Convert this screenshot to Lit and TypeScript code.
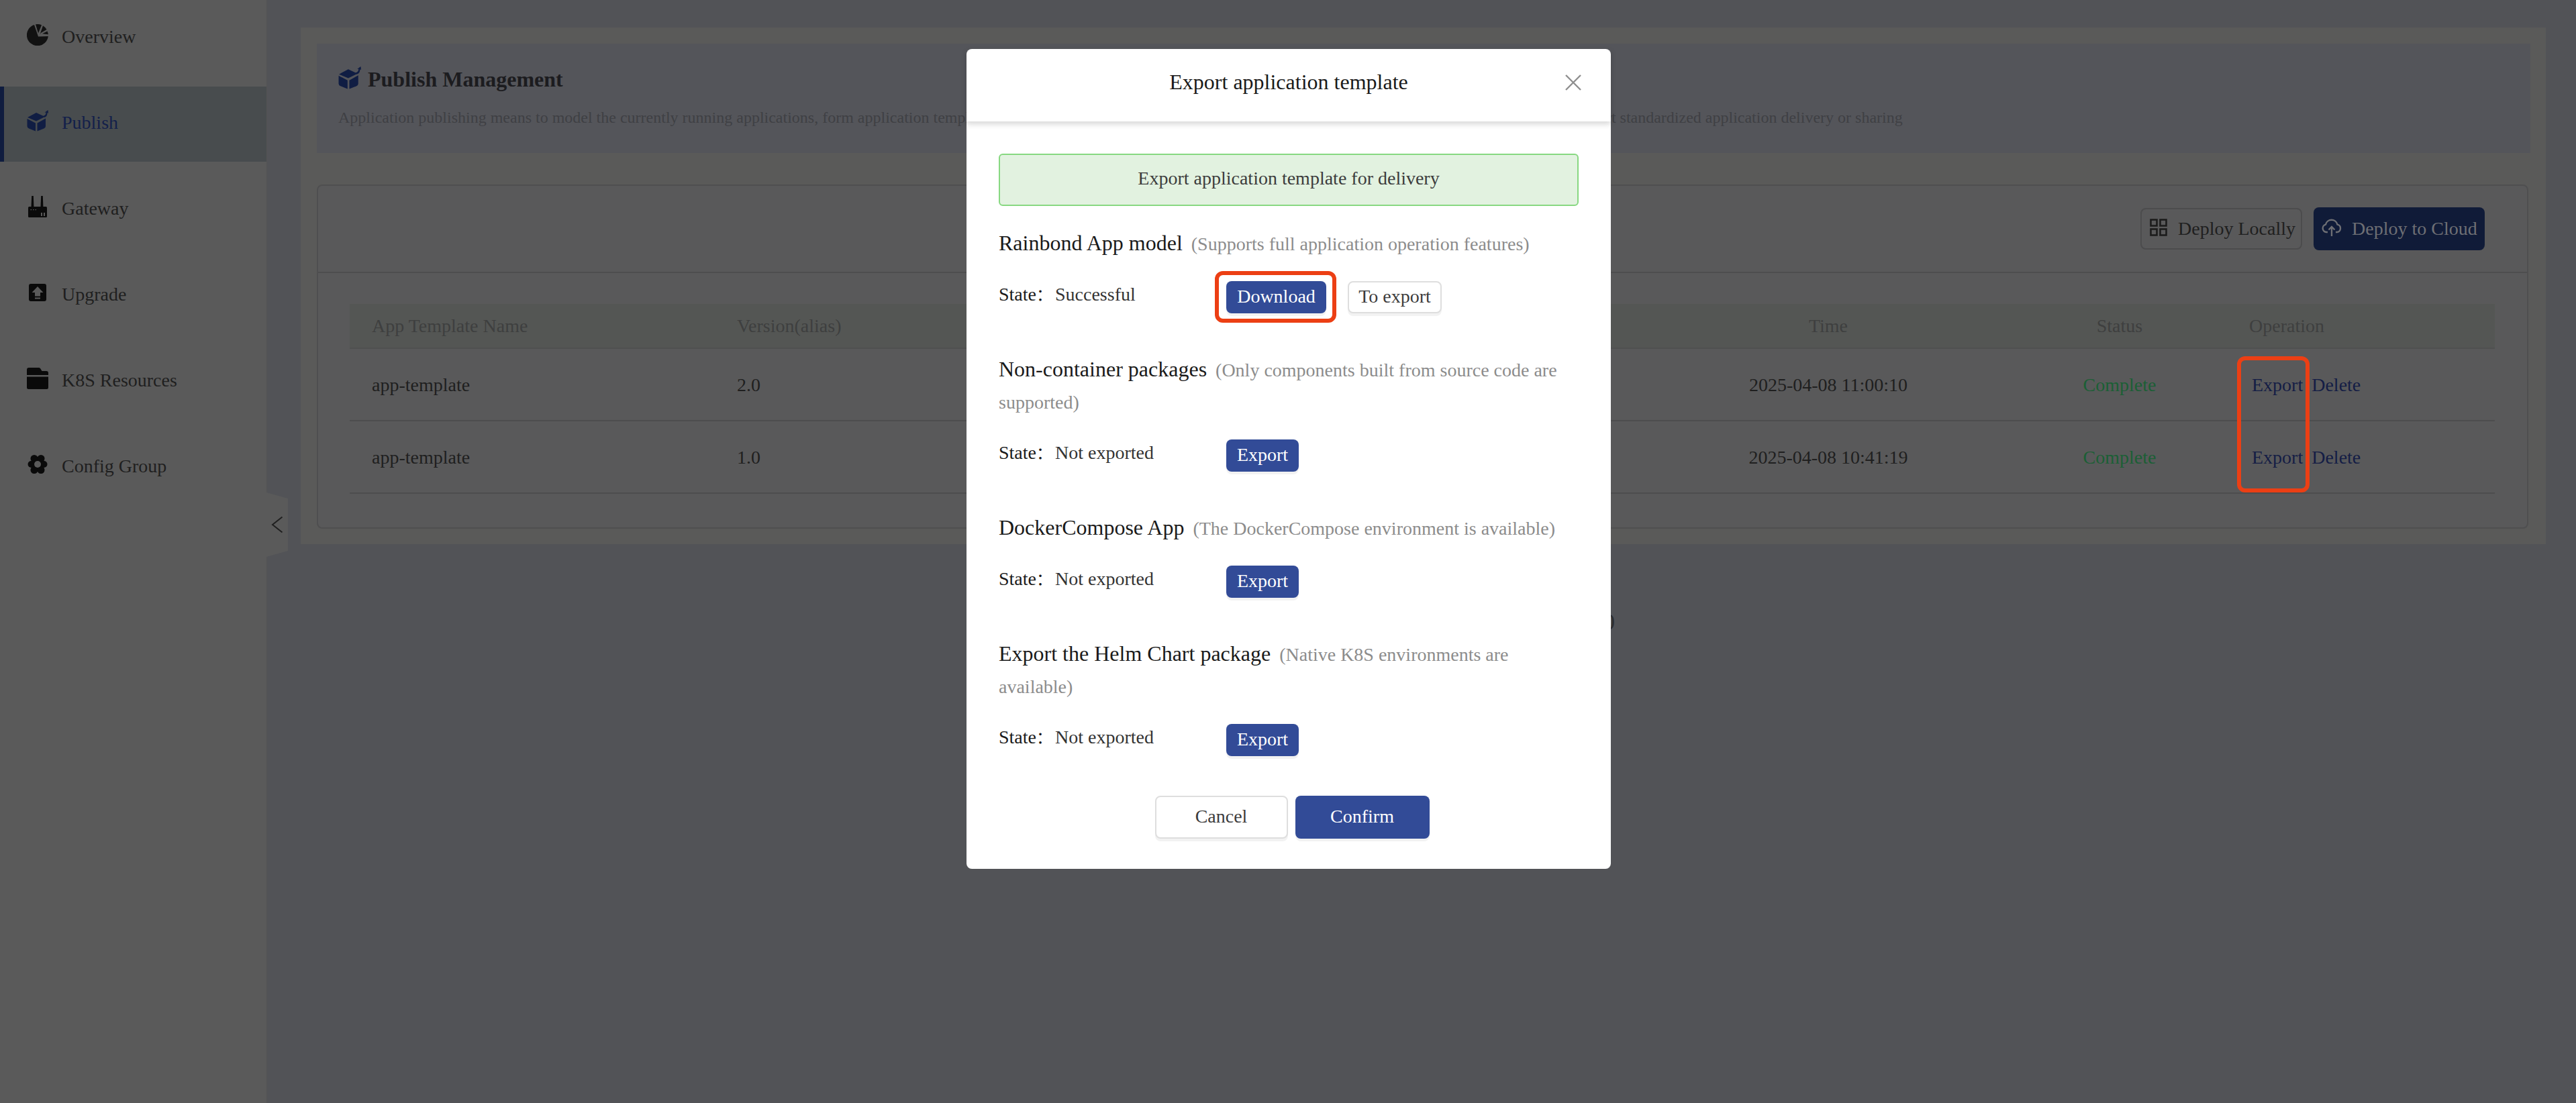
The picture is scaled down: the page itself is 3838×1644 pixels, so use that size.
import { LitElement, html, css } from "lit";
import { customElement } from "lit/decorators.js";

const cube = (color: string) => html`<svg viewBox="0 0 32 32" width="100%" height="100%" fill="${color}">
  <path d="M1 11 L14 4 L27 10 L14 16.5 Z"/>
  <path d="M0.5 13 L13 19.5 L13 31.5 L3 27.5 Q0.5 26.5 0.5 24 Z"/>
  <path d="M28 12.5 L28 24 Q28 26.5 25.5 27.5 L15.5 31.5 L15.5 19.5 Z"/>
  <path d="M24 9 Q28.5 8 28.5 3.5 L26.5 3.8 L31.5 0 L32 5 L30.5 4 Q30.5 10 26 11 Z"/>
</svg>`;

const icons: Record<string, unknown> = {
  overview: html`<svg viewBox="0 0 32 32" width="32" height="32" fill="#121212">
    <path d="M11 1 A16 16 0 1 0 31.8 18 L17 18.5 Z"/>
    <path d="M13 0.3 A16 16 0 0 1 22 1.2 L17 13.5 Z"/>
    <path d="M24 2.2 A16 16 0 0 1 29.5 8 L21 13 L19.5 15.5 Z"/>
    <path d="M23 14.3 L30.5 10.5 A16 16 0 0 1 31.8 15.3 Z"/>
  </svg>`,
  publish: cube("#101d43"),
  gateway: html`<svg viewBox="0 0 32 32" width="32" height="32" fill="#0a0a0a">
    <path d="M7.2 0 H9.8 L10.4 16 H6.5 Z"/>
    <path d="M21.2 0 H23.8 L24.4 16 H20.5 Z"/>
    <rect x="2" y="16" width="28" height="16" rx="1.5"/>
    <g fill="#5a5a5a">
      <rect x="5.5" y="20" width="1.5" height="1.2"/><rect x="9" y="20" width="1.5" height="1.2"/><rect x="12.5" y="20" width="1.5" height="1.2"/>
      <rect x="21" y="25" width="2" height="5"/><rect x="25" y="25" width="2" height="5"/>
    </g>
  </svg>`,
  upgrade: html`<svg viewBox="0 0 32 32" width="32" height="32">
    <rect x="3" y="3" width="26" height="26" rx="3" fill="#0a0a0a"/>
    <path d="M16 7 L24.5 16 H20 V21.5 H12 V16 H7.5 Z" fill="#5a5a5a"/>
    <rect x="12" y="23.5" width="8" height="2" fill="#5a5a5a"/>
  </svg>`,
  k8s: html`<svg viewBox="0 0 32 32" width="32" height="32" fill="#0a0a0a">
    <path d="M0 11 V3 Q0 0 3 0 H18 Q20 0 21.5 3.5 L22.5 5 H29 Q32 5 32 8 V11 Z"/>
    <path d="M0 13.5 H32 V29.5 Q32 32 29.5 32 H2.5 Q0 32 0 29.5 Z"/>
  </svg>`,
  config: html`<svg viewBox="0 0 32 32" width="32" height="32" fill="#0a0a0a">
    <circle cx="16" cy="16" r="10.5"/>
    <circle cx="11" cy="7.5" r="5.5"/><circle cx="21" cy="7.5" r="5.5"/>
    <circle cx="6.5" cy="16" r="5"/><circle cx="25.5" cy="16" r="5"/>
    <circle cx="11" cy="24.5" r="5.5"/><circle cx="21" cy="24.5" r="5.5"/>
    <circle cx="16" cy="16" r="5" fill="#5a5a5a"/>
  </svg>`,
};

const nav = [
  ["overview", "Overview"],
  ["publish", "Publish"],
  ["gateway", "Gateway"],
  ["upgrade", "Upgrade"],
  ["k8s", "K8S Resources"],
  ["config", "Config Group"],
];

const rows = [
  ["app-template", "2.0", "2025-04-08 11:00:10"],
  ["app-template", "1.0", "2025-04-08 10:41:19"],
];

const sections = [
  { t: "Rainbond App model", s: "(Supports full application operation features)", v: "Successful", done: true },
  { t: "Non-container packages", s: "(Only components built from source code are supported)", v: "Not exported", done: false },
  { t: "DockerCompose App", s: "(The DockerCompose environment is available)", v: "Not exported", done: false },
  { t: "Export the Helm Chart package", s: "(Native K8S environments are available)", v: "Not exported", done: false },
];

@customElement("app-root")
export class AppRoot extends LitElement {
  static styles = css`
    :host { display: block; width: 3838px; height: 1644px; position: relative; overflow: hidden;
      font-family: "Liberation Serif", "Noto Sans CJK SC", serif; background: #525357; color: #1f1f1f; font-size: 28px; }
    * { box-sizing: border-box; }
    .layout { display: flex; height: 1644px; }
    .side { width: 398px; flex: none; background: #5a5a5a; padding-top: 1px; display: flex; flex-direction: column; gap: 16px;
      border-right: 1px solid #535354; position: relative; }
    .item { height: 112px; display: flex; align-items: center; gap: 20px; padding-left: 40px; color: #1f1f1f; font-size: 28px; }
    .item.on { background: #484c4e; color: #13204a; box-shadow: inset 6px 0 0 #0f1c3f; }
    .lbl { margin-top: -4px; }
    .ico { width: 32px; height: 32px; flex: none; margin-top: -10px; display: block; }
    .ico svg { display: block; }
    .tab { position: absolute; left: 397px; top: 734px; width: 32px; height: 96px; background: #5a5a5a;
      clip-path: polygon(0 0, 100% 9px, 100% 87px, 0 100%); display: flex; align-items: center; justify-content: center; }
    .tab svg { display: block; }
    .main { flex: 1; padding: 41px 45px 0 50px; min-width: 0; }
    .panel { background: #5a5a59; padding: 24px 26px 25px 24px; height: 770px; }
    .head { background: #54555a; height: 163px; padding: 35px 32px 0 32px; margin-right: -3px; }
    .h-title { display: flex; align-items: center; height: 36px; font-weight: 700; font-size: 32px; color: #1c1c1f; gap: 10px; }
    .h-ico { width: 34px; height: 36px; flex: none; margin-top: -4px; }
    .h-desc { font-size: 24px; color: #3f4044; white-space: nowrap; margin-top: 25px; line-height: 28px; }
    .card { margin-top: 47px; height: 513px; background: #59595a; border: 2px solid #4f4f50; border-radius: 8px; }
    .bar { height: 130px; border-bottom: 2px solid #4d4d4e; display: flex; justify-content: flex-end; align-items: center; gap: 17px; padding: 0 63px 0 0; }
    .dbtn { height: 64px; border-radius: 8px; display: flex; align-items: center; font-size: 28px; }
    .dl { width: 241px; border: 2px solid #4c4c4d; color: #1f1f1f; padding-left: 12px; gap: 16px; height: 62px; }
    .dc { width: 255px; background: #101b38; color: #6e6f74; padding-left: 12px; gap: 15px; }
    .dbtn svg { display: block; margin-top: -4px; }
    .table { margin: 46px 48px 0 47px; }
    .tr { display: grid; grid-template-columns: 544px 1383px 552px 316px 400px; align-items: center; height: 108px; border-bottom: 2px solid #4d4d4e; padding-top: 2px; }
    .tr.th { height: 67px; background: #545654; color: #3e3f3f; border-bottom-color: #4f5050; font-size: 28px; padding-top: 0; }
    .c { padding-left: 33px; }
    .th .op { padding-left: 35px; }
    .mid { padding-left: 0; text-align: center; }
    .ok { color: #1b5f35; }
    .ops { display: flex; gap: 13px; padding-left: 39px; color: #141d45; }
    .pager { font-size: 34px; color: #2c2c2e; margin: 96px 0 0 1941px; line-height: 40px; width: 17px; }

    .modal { position: absolute; left: 1440px; top: 73px; width: 960px; height: 1222px; background: #fff; border-radius: 8px; }
    .m-head { height: 108px; display: flex; align-items: center; justify-content: center; position: relative; font-size: 32px; color: #1a1a1a;
      box-shadow: 0 4px 8px rgba(0,0,0,.16); padding-bottom: 10px; }
    .close { position: absolute; right: 44px; top: 38px; display: block; }
    .m-body { padding: 48px 48px 0; color: #1f1f1f; }
    .alert { height: 78px; background: #e2f2e0; border: 2px solid #87d881; border-radius: 6px; display: flex; align-items: center; justify-content: center; color: #3c3c3c; font-size: 28px; padding-bottom: 4px; }
    .sec-first { margin-top: 31px; }
    .sec { margin-bottom: 59px; }
    .t { line-height: 48px; font-size: 32px; color: #1a1a1a; }
    .s { font-size: 28px; color: #8c8c8c; margin-left: 6px; line-height: 1; }
    .st { display: flex; margin-top: 33px; height: 48px; }
    .lab { width: 339px; flex: none; font-size: 28px; line-height: 40px; color: #333; }
    .lab b { font-weight: 400; color: #1a1a1a; }
    .colon { font-size: 24px; margin-right: 4px; line-height: 1; }
    .btn { height: 48px; border-radius: 8px; font-size: 28px; display: inline-flex; align-items: center; justify-content: center; box-shadow: 0 4px 0 rgba(0,0,0,.05); padding-bottom: 2px; }
    .pri { background: #324b97; color: #fff; }
    .def { background: #fff; border: 2px solid #dedede; color: #3c3c3c; }
    .w-dl { width: 149px; }
    .w-ex { width: 108px; }
    .w-to { width: 140px; margin-left: 32px; }
    .foot { display: flex; justify-content: center; gap: 11px; margin-top: 2px; padding-left: 10px; }
    .foot .btn { height: 64px; width: 198px; }
    .foot .pri { width: 200px; }

    .mark { position: absolute; border: 6px solid #ec3f14; border-radius: 12px; pointer-events: none; }
    .m1 { left: 1810px; top: 404px; width: 181px; height: 77px; }
    .m2 { left: 3333px; top: 531px; width: 108px; height: 203px; }
  `;

  render() {
    return html`
      <div class="layout">
        <aside class="side">
          ${nav.map(
            ([k, l]) => html`<div class="item ${k === "publish" ? "on" : ""}"><span class="ico">${icons[k]}</span><span class="lbl">${l}</span></div>`
          )}
          <div class="tab"><svg width="18" height="26" viewBox="0 0 18 26" fill="none" stroke="#1f1f1f" stroke-width="2"><path d="M16.5 1.5 L2 13 L16.5 24.5"/></svg></div>
        </aside>
        <main class="main">
          <section class="panel">
            <div class="head">
              <div class="h-title"><span class="h-ico">${cube("#101d43")}</span><span>Publish Management</span></div>
              <div class="h-desc">Application publishing means to model the currently running applications, form application templates, and then publish them to the local store or the cloud market, and further export them to support standardized application delivery or sharing</div>
            </div>
            <div class="card">
              <div class="bar">
                <div class="dbtn dl">
                  <svg width="26" height="26" viewBox="0 0 26 26" fill="none" stroke="#1c1c1c" stroke-width="2.6"><rect x="1.5" y="1.5" width="9" height="9"/><rect x="15.5" y="1.5" width="9" height="9"/><rect x="1.5" y="15.5" width="9" height="9"/><rect x="15.5" y="15.5" width="9" height="9"/></svg>
                  <span>Deploy Locally</span>
                </div>
                <div class="dbtn dc">
                  <svg width="30" height="28" viewBox="0 0 30 28" fill="none" stroke="#6e6f74" stroke-width="2.4"><path d="M9 21 H7 A5.8 5.8 0 0 1 6 9.6 A9 9 0 0 1 23.5 9.6 A5.8 5.8 0 0 1 23 21 H21"/><path d="M15 27 V13 M10.5 17.5 L15 13 L19.5 17.5"/></svg>
                  <span>Deploy to Cloud</span>
                </div>
              </div>
              <div class="table">
                <div class="tr th">
                  <div class="c">App Template Name</div><div class="c">Version(alias)</div><div class="mid">Time</div><div class="mid">Status</div><div class="c op">Operation</div>
                </div>
                ${rows.map(
                  (r) => html`<div class="tr">
                    <div class="c">${r[0]}</div><div class="c">${r[1]}</div><div class="mid">${r[2]}</div><div class="mid ok">Complete</div>
                    <div class="ops"><span>Export</span><span>Delete</span></div>
                  </div>`
                )}
              </div>
            </div>
          </section>
          <div class="pager">0</div>
        </main>
      </div>

      <div class="modal">
        <div class="m-head">
          Export application template
          <svg class="close" width="24" height="24" viewBox="0 0 24 24" stroke="#8f8f8f" stroke-width="2.4" fill="none"><path d="M1 1 L23 23 M23 1 L1 23"/></svg>
        </div>
        <div class="m-body">
          <div class="alert">Export application template for delivery</div>
          ${sections.map(
            (s, i) => html`<div class="sec ${i === 0 ? "sec-first" : ""}">
              <div class="t">${s.t}<span class="s"> ${s.s}</span></div>
              <div class="st">
                <div class="lab"><b>State<span class="colon">：</span></b>${s.v}</div>
                ${s.done
                  ? html`<div class="btn pri w-dl">Download</div><div class="btn def w-to">To export</div>`
                  : html`<div class="btn pri w-ex">Export</div>`}
              </div>
            </div>`
          )}
          <div class="foot"><div class="btn def">Cancel</div><div class="btn pri">Confirm</div></div>
        </div>
      </div>

      <div class="mark m1"></div>
      <div class="mark m2"></div>
    `;
  }
}
